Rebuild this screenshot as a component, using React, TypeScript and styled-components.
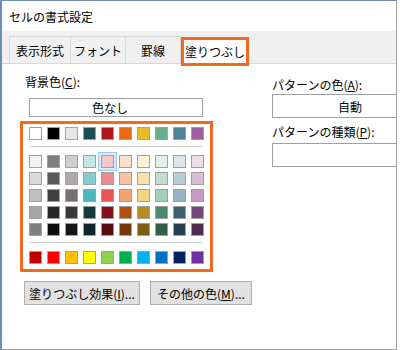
import React from 'react'
import styled, { createGlobalStyle } from 'styled-components'

const GlobalStyle = createGlobalStyle`
    body {
        margin: 0;
        background: #ffffff;
        font-family: "Noto Sans CJK JP", "Noto Sans", sans-serif;
        font-size: 12px;
        color: #000000;
    }
`

const ORANGE = '#f26a21'

const themeRow = ['#ffffff', '#000000', '#e7e6e6', '#1e4e50', '#b0161a', '#ec6a13', '#e8b92b', '#69ad91', '#4f8199', '#a05e9e']

const shadeRows = [
    ['#f2f2f2', '#7f7f7f', '#d0cece', '#c4e6e8', '#f6c7c8', '#fbe0cf', '#fbf1d5', '#e0efe9', '#dce6ec', '#ecdeeb'],
    ['#d9d9d9', '#595959', '#aeaaaa', '#86cdd2', '#ee8a8d', '#f8c1a0', '#f6e3aa', '#c2ded3', '#b9cdd8', '#d9bdd8'],
    ['#bfbfbf', '#404040', '#757171', '#4cb7be', '#e8555a', '#f5a273', '#f1d47f', '#a3cebd', '#96b3c3', '#c69cc5'],
    ['#a6a6a6', '#262626', '#3a3838', '#173a3c', '#86111a', '#b24f0f', '#b78c1c', '#4b8a6e', '#3c6073', '#784677'],
    ['#7f7f7f', '#0d0d0d', '#161616', '#0f2728', '#5a0b0f', '#77350a', '#7b5e13', '#335c4a', '#28404d', '#502e4f'],
]

const standardRow = ['#c00000', '#ff0000', '#ffc000', '#ffff00', '#92d050', '#00b050', '#00b0f0', '#0070c0', '#002060', '#7030a0']

const Window = styled.div`
    width: 397px;
    height: 350px;
    box-sizing: border-box;
    border-top: 1px solid #6f8db5;
    border-left: 2px solid #6f8db5;
    border-right: 1px solid #a0a0a0;
    border-bottom: 1px solid #a0a0a0;
    background: #ffffff;
    overflow: hidden;
    display: flex;
    flex-direction: column;
`

const TitleBar = styled.div`
    height: 30px;
    display: flex;
    align-items: center;
    padding-left: 7px;
    font-size: 12px;
`

const TabStrip = styled.div`
    height: 32px;
    background: #f0f0f0;
    border-bottom: 1px solid #d9d9d9;
    display: flex;
    align-items: flex-end;
    padding-left: 7px;
`

const Tab = styled.div<{ $w: number; $active?: boolean }>`
    width: ${p => p.$w}px;
    box-sizing: border-box;
    display: flex;
    align-items: center;
    justify-content: center;
    position: relative;
    ${p => p.$active ? `
        height: 29px;
        margin-bottom: -3px;
        margin-left: 1px;
        border: 3px solid ${ORANGE};
        background: #ffffff;
        z-index: 1;
    ` : `
        height: 27px;
        border: 1px solid #d9d9d9;
        border-bottom: none;
        margin-right: -1px;
        background: #f0f0f0;
    `}
`

const Content = styled.div`
    display: flex;
    padding: 10px 0 0 18px;
`

const LeftCol = styled.div`
    width: 193px;
    display: flex;
    flex-direction: column;
`

const RightCol = styled.div`
    margin-left: 59px;
    padding-top: 3px;
    display: flex;
    flex-direction: column;
`

const Label = styled.div<{ $indent?: number; $gap?: number }>`
    line-height: 16px;
    height: 16px;
    padding-left: ${p => p.$indent || 0}px;
    margin-top: ${p => p.$gap || 0}px;
    white-space: nowrap;
`

const NoColorButton = styled.div`
    margin: 8px 0 0 9px;
    width: 174px;
    height: 19px;
    box-sizing: border-box;
    border: 1px solid #a0a0a0;
    display: flex;
    align-items: center;
    justify-content: center;
    padding-right: 12px;
`

const Palette = styled.div`
    margin-top: 4px;
    height: 151px;
    box-sizing: border-box;
    border: 3px solid ${ORANGE};
    padding: 3px 6px 0 6px;
    display: flex;
    flex-direction: column;
`

const SwatchRow = styled.div<{ $gap?: number }>`
    display: flex;
    gap: 5px;
    margin-top: ${p => p.$gap || 0}px;
`

const Swatch = styled.div<{ $color: string; $selected?: boolean }>`
    width: 13px;
    height: 13px;
    box-sizing: border-box;
    border: 1px solid #a0a0a0;
    background: ${p => p.$color};
    ${p => p.$selected && `
        box-shadow: 0 0 0 2px #d5eafb, 0 0 0 3px #99c9ef;
    `}
`

const Separator = styled.div<{ $top: number; $bottom: number }>`
    height: 1px;
    background: #c8c8c8;
    margin: ${p => p.$top}px 2px ${p => p.$bottom}px 1px;
`

const DropBox = styled.div<{ $gap: number }>`
    margin-top: ${p => p.$gap}px;
    width: 156px;
    height: 24px;
    box-sizing: border-box;
    border: 1px solid #a0a0a0;
    display: flex;
    align-items: center;
    justify-content: center;
`

const ButtonRow = styled.div`
    display: flex;
    gap: 10px;
    margin-top: 9px;
    padding-left: 22px;
`

const PushButton = styled.div<{ $w: number }>`
    width: ${p => p.$w}px;
    height: 24px;
    box-sizing: border-box;
    background: #e1e1e1;
    border: 1px solid #adadad;
    display: flex;
    align-items: center;
    justify-content: center;
    white-space: nowrap;
`

const Swatches = ({ colors, selected }: { colors: string[]; selected?: number }) => (
    <>
        {colors.map((c, i) => <Swatch key={i} $color={c} $selected={i === selected} />)}
    </>
)

const App = () => {
    return (
        <>
            <GlobalStyle />
            <Window>
                <TitleBar>セルの書式設定</TitleBar>
                <TabStrip>
                    <Tab $w={62}>表示形式</Tab>
                    <Tab $w={56}>フォント</Tab>
                    <Tab $w={56}>罫線</Tab>
                    <Tab $w={68} $active>塗りつぶし</Tab>
                </TabStrip>
                <Content>
                    <LeftCol>
                        <Label $indent={5}>背景色(<u>C</u>):</Label>
                        <NoColorButton>色なし</NoColorButton>
                        <Palette>
                            <SwatchRow><Swatches colors={themeRow} /></SwatchRow>
                            <Separator $top={6} $bottom={8} />
                            {shadeRows.map((row, i) => (
                                <SwatchRow key={i} $gap={i === 0 ? 0 : 4}>
                                    <Swatches colors={row} selected={i === 0 ? 4 : undefined} />
                                </SwatchRow>
                            ))}
                            <Separator $top={6} $bottom={8} />
                            <SwatchRow><Swatches colors={standardRow} /></SwatchRow>
                        </Palette>
                    </LeftCol>
                    <RightCol>
                        <Label>パターンの色(<u>A</u>):</Label>
                        <DropBox $gap={1}>自動</DropBox>
                        <Label $gap={6}>パターンの種類(<u>P</u>):</Label>
                        <DropBox $gap={3} />
                    </RightCol>
                </Content>
                <ButtonRow>
                    <PushButton $w={116}>塗りつぶし効果(<u>I</u>)...</PushButton>
                    <PushButton $w={102}>その他の色(<u>M</u>)...</PushButton>
                </ButtonRow>
            </Window>
        </>
    )
}

export default App
